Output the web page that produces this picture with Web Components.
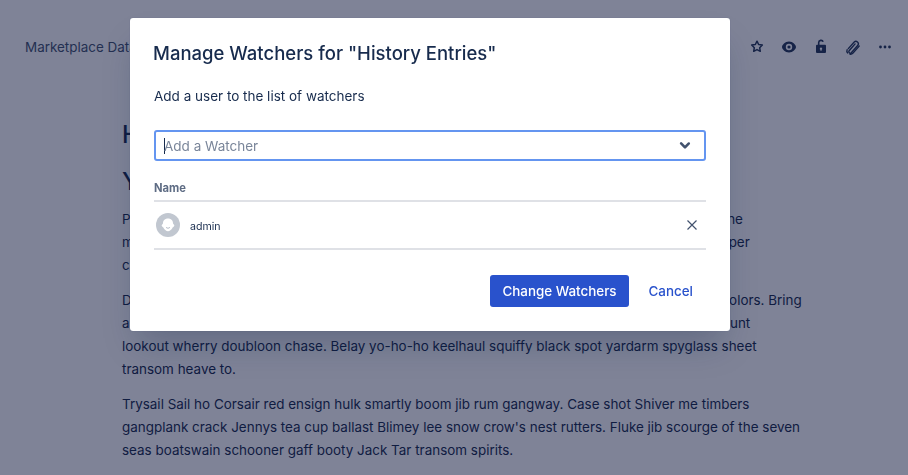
<!DOCTYPE html>
<html lang="en">
<head>
<meta charset="utf-8">
<title>Manage Watchers</title>
<style>
    html, body {
        margin: 0;
        height: 100%;
        overflow: hidden;
        background: #fff;
        font-family: Inter, "Liberation Sans", sans-serif;
        color: #172b4d;
    }
</style>
</head>
<body>
<wiki-page>
    <page-toolbar title="Marketplace Data Center"></page-toolbar>
    <page-content>
        <h1 slot="title">History Entries</h1>
        <h2 slot="title">Your first page</h2>
        <p>Pinnace holystone mizzenmast quarter crow's nest nipperkin grog yardarm hempen halter furl the<br>mizzen barque rigging Swab bilge rat gun spyglass main sheet starboard grog black jack interloper<br>chantey doubloon gangway rutters.</p>
        <p>Deadlights jack lad schooner scallywag dance the hempen jig carouser broadside cable strike colors. Bring a spring upon her cable holystone blow the man down spanker Shiver me timbers to go on account<br>lookout wherry doubloon chase. Belay yo-ho-ho keelhaul squiffy black spot yardarm spyglass sheet transom heave to.</p>
        <p>Trysail Sail ho Corsair red ensign hulk smartly boom jib rum gangway. Case shot Shiver me timbers gangplank crack Jennys tea cup ballast Blimey lee snow crow's nest rutters. Fluke jib scourge of the seven seas boatswain schooner gaff booty Jack Tar transom spirits.</p>
    </page-content>
</wiki-page>
<modal-dialog heading='Manage Watchers for "History Entries"'>
    <p>Add a user to the list of watchers</p>
    <watcher-select placeholder="Add a Watcher"></watcher-select>
    <watcher-table>
        <watcher-row name="admin"></watcher-row>
    </watcher-table>
    <dialog-button slot="actions" kind="primary">Change Watchers</dialog-button>
    <dialog-button slot="actions" kind="link">Cancel</dialog-button>
</modal-dialog>

<script>
class WikiPage extends HTMLElement {
    constructor() {
        super();
        this.attachShadow({ mode: 'open' });
        this.shadowRoot.innerHTML = `
            <style>
                :host { display: block; height: 475px; overflow: hidden; }
            </style>
            <slot></slot>
        `;
    }
}

class PageToolbar extends HTMLElement {
    constructor() {
        super();
        this.attachShadow({ mode: 'open' });
    }

    connectedCallback() {
        this.shadowRoot.innerHTML = `
            <style>
                :host {
                    display: flex;
                    align-items: center;
                    justify-content: space-between;
                    height: 24px;
                    padding: 35px 11px 0 25px;
                    font-size: 13.45px;
                    color: #42526e;
                }
                .icons { display: flex; gap: 8px; color: #253858; }
                svg { display: block; width: 24px; height: 24px; fill: currentColor; }
            </style>
            <span>${this.getAttribute('title')}</span>
            <div class="icons">
                <svg viewBox="0 0 24 24"><path fill="none" stroke="currentColor" stroke-width="1.5" stroke-linejoin="round" d="M12 6.200L13.650 9.530 17.330 10.070 14.660 12.670 15.290 16.330 12 14.600 8.710 16.330 9.340 12.670 6.670 10.070 10.350 9.530Z"/></svg>
                <svg viewBox="0 0 24 24"><path fill-rule="evenodd" d="M12 6.500c4 0 7 3.600 7 5.500s-3 5.500-7 5.500-7-3.600-7-5.500 3-5.500 7-5.500zm0 2.300a3.200 3.200 0 1 0 0 6.400 3.200 3.200 0 0 0 0-6.400zm0 1.600a1.600 1.600 0 1 1 0 3.200 1.600 1.600 0 0 1 0-3.200z"/></svg>
                <svg viewBox="0 0 24 24"><path transform="translate(0 -1)" fill-rule="evenodd" d="M8 10.800h.9V8.600a3.100 3.100 0 0 1 6-1.100l-1.500.6a1.500 1.500 0 0 0-2.900.5v2.200H16a1 1 0 0 1 1 1V18a1 1 0 0 1-1 1H8a1 1 0 0 1-1-1v-6.200a1 1 0 0 1 1-1zm4 2.600a1.300 1.300 0 0 0-.6 2.400v.9h1.200v-.9a1.300 1.300 0 0 0-.6-2.400z"/></svg>
                <svg viewBox="0 0 24 24" style="fill:none;stroke:currentColor;stroke-width:1.400;stroke-linecap:round"><path d="M7.300 13.600l5.900-6.600a2.500 2.500 0 0 1 3.700 3.300l-6.600 7.400a1.500 1.500 0 0 1-2.200-2l6-6.800M6.600 17.900a3.200 3.200 0 0 1-.5-3.200M9 19.200a3.400 3.400 0 0 0 3-1.100l6.200-7"/></svg>
                <svg viewBox="0 0 24 24"><circle cx="7.500" cy="12" r="1.400"/><circle cx="12" cy="12" r="1.400"/><circle cx="16.500" cy="12" r="1.400"/></svg>
            </div>
        `;
    }
}

class PageContent extends HTMLElement {
    constructor() {
        super();
        this.attachShadow({ mode: 'open' });
        this.shadowRoot.innerHTML = `
            <style>
                :host {
                    display: block;
                    width: 684px;
                    margin: 0 0 0 122px;
                    padding-top: 62px;
                    font-size: 13.45px;
                    line-height: 23px;
                }
                ::slotted(h1), ::slotted(h2) {
                    margin: 0;
                    font-size: 24px;
                    font-weight: 500;
                    line-height: 28px;
                }
                ::slotted(h2) { margin-top: 19px; margin-bottom: 12px; }
                ::slotted(p) { margin: 0 0 12px; }
            </style>
            <slot name="title"></slot>
            <slot></slot>
        `;
    }
}

class ModalDialog extends HTMLElement {
    constructor() {
        super();
        this.attachShadow({ mode: 'open' });
    }

    connectedCallback() {
        this.shadowRoot.innerHTML = `
            <style>
                :host {
                    position: fixed;
                    inset: 0;
                    display: flex;
                    justify-content: center;
                    align-items: flex-start;
                    padding: 18px 48px 0 0;
                    box-sizing: border-box;
                    background: rgba(9, 17, 55, 0.52);
                }
                .dialog {
                    width: 600px;
                    box-sizing: border-box;
                    height: 313px;
                    padding: 23px 24px 24px;
                    background: #fff;
                    border-radius: 3px;
                    box-shadow: 0 0 1px rgba(9,30,66,0.31), 0 20px 32px -8px rgba(9,30,66,0.25);
                    font-size: 13.5px;
                    color: #172b4d;
                    display: flex;
                    flex-direction: column;
                }
                h1 {
                    margin: 0 0 0 -1px;
                    font-size: 18.5px;
                    font-weight: 500;
                    line-height: 24px;
                }
                ::slotted(p) { margin: 21px 0 24px; line-height: 20px; }
                footer {
                    display: flex;
                    justify-content: flex-end;
                    gap: 8px;
                    margin: 25px 1px 0 0;
                }
            </style>
            <div class="dialog" role="dialog">
                <h1>${this.getAttribute('heading').replace(/"/g, '&quot;')}</h1>
                <slot></slot>
                <footer><slot name="actions"></slot></footer>
            </div>
        `;
    }
}

class WatcherSelect extends HTMLElement {
    constructor() {
        super();
        this.attachShadow({ mode: 'open' });
    }

    connectedCallback() {
        this.shadowRoot.innerHTML = `
            <style>
                :host {
                    display: flex;
                    align-items: center;
                    height: 32px;
                    box-sizing: border-box;
                    border: 2px solid #6495f0;
                    border-radius: 3px;
                    padding: 0 8px;
                    font-size: 13.5px;
                    color: #7a869a;
                }
                .caret { width: 1px; height: 16px; background: #172b4d; margin-right: -1px; }
                span { flex: 1; }
                svg { display: block; width: 24px; height: 24px; fill: #42526e; margin-right: -1px; }
            </style>
            <i class="caret"></i>
            <span>${this.getAttribute('placeholder')}</span>
            <svg viewBox="0 0 24 24"><path d="M8.300 9.300a1 1 0 0 1 1.400 0L12 11.600l2.300-2.300a1 1 0 0 1 1.400 1.400l-3 3a1 1 0 0 1-1.400 0l-3-3a1 1 0 0 1 0-1.400z" transform="translate(-3.600 -3.600) scale(1.300)"/></svg>
        `;
    }
}

class WatcherTable extends HTMLElement {
    constructor() {
        super();
        this.attachShadow({ mode: 'open' });
        this.shadowRoot.innerHTML = `
            <style>
                :host { display: block; margin-top: 16px; }
                .head {
                    height: 22px;
                    padding-top: 1px;
                    font-size: 11.2px;
                    font-weight: 700;
                    line-height: 20px;
                    color: #5e6c84;
                    border-bottom: 2px solid #dfe1e6;
                }
            </style>
            <div class="head">Name</div>
            <slot></slot>
        `;
    }
}

class WatcherRow extends HTMLElement {
    constructor() {
        super();
        this.attachShadow({ mode: 'open' });
    }

    connectedCallback() {
        this.shadowRoot.innerHTML = `
            <style>
                :host {
                    display: flex;
                    align-items: center;
                    height: 46px;
                    border-bottom: 2px solid #dfe1e6;
                    padding: 0 2px;
                    font-size: 10.6px;
                }
                .avatar { display: block; width: 24px; height: 24px; margin-right: 10px; }
                span { flex: 1; padding-top: 2px; }
                .remove { display: block; width: 24px; height: 24px; margin-right: 0; }
            </style>
            <svg class="avatar" viewBox="0 0 24 24">
                <circle cx="12" cy="12" r="12" fill="#c1c7d0"/>
                <path fill="#fff" d="M12 5.500c3.200 0 5 2.200 5 4.600 0 .5.1.9.8 1.500.7.7.7 1.400 0 2-.7.6-1.100 1-1.700 2-.9 1.500-2.300 2.600-4.100 2.600s-3.200-1.100-4.100-2.600c-.6-1-1-1.400-1.700-2-.7-.6-.7-1.300 0-2 .7-.6.8-1 .8-1.500 0-2.400 1.800-4.600 5-4.600z"/>
                <path fill="none" stroke="#a5adba" stroke-width=".8" stroke-linecap="round" d="M10.300 14.600c.9.900 2.500.900 3.400 0"/>
            </svg>
            <span>${this.getAttribute('name')}</span>
            <svg class="remove" viewBox="0 0 24 24" fill="none" stroke="#42526e" stroke-width="1.200"><path d="M7.500 7.500l9 9M16.500 7.500l-9 9"/></svg>
        `;
    }
}

class DialogButton extends HTMLElement {
    constructor() {
        super();
        this.attachShadow({ mode: 'open' });
        this.shadowRoot.innerHTML = `
            <style>
                :host {
                    display: inline-flex;
                    align-items: center;
                    height: 32px;
                    padding: 0 12px;
                    border-radius: 3px;
                    font-size: 13.4px;
                    font-weight: 500;
                    color: #2952cc;
                }
                :host([kind="primary"]) { background: #2952cc; color: #fff; }
            </style>
            <slot></slot>
        `;
    }
}

customElements.define('wiki-page', WikiPage);
customElements.define('page-toolbar', PageToolbar);
customElements.define('page-content', PageContent);
customElements.define('modal-dialog', ModalDialog);
customElements.define('watcher-select', WatcherSelect);
customElements.define('watcher-table', WatcherTable);
customElements.define('watcher-row', WatcherRow);
customElements.define('dialog-button', DialogButton);
</script>
</body>
</html>
